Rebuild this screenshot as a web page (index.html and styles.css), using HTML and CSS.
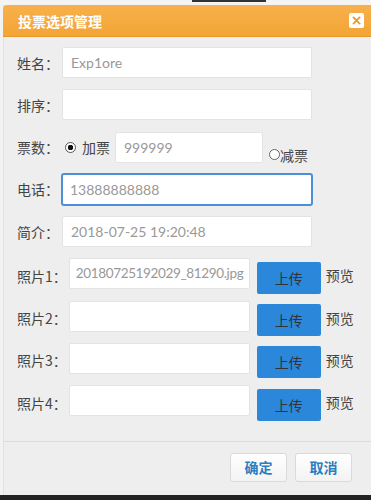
FILE: index.html
```html
<!DOCTYPE html>
<html lang="zh-CN">
<head>
  <meta charset="UTF-8">
  <title>投票选项管理</title>
  <link rel="stylesheet" href="styles.css">
</head>
<body>

<div class="topStrip"><span class="topDark"></span></div>

<div class="dialog">
  <div class="dialogTitle">
    <span>投票选项管理</span>
    <span class="closeBtn">×</span>
  </div>

  <div class="dialogBody">
    <div class="row">
      <label>姓名：</label>
      <div class="field wide">Exp1ore</div>
    </div>
    <div class="row">
      <label>排序：</label>
      <div class="field wide"></div>
    </div>
    <div class="row">
      <label>票数：</label>
      <span class="radio checked"></span>
      <span class="radioText">加票</span>
      <div class="field vote">999999</div>
      <span class="radio low"></span>
      <span class="radioText tight">减票</span>
    </div>
    <div class="row">
      <label>电话：</label>
      <div class="field wide focus">13888888888</div>
    </div>
    <div class="row">
      <label>简介：</label>
      <div class="field wide">2018-07-25 19:20:48</div>
    </div>
    <div class="row photoRow">
      <label>照片1：</label>
      <div class="field photo">20180725192029_81290.jpg</div>
      <span class="uploadBtn">上传</span>
      <span class="preview">预览</span>
    </div>
    <div class="row photoRow">
      <label>照片2：</label>
      <div class="field photo"></div>
      <span class="uploadBtn">上传</span>
      <span class="preview">预览</span>
    </div>
    <div class="row photoRow">
      <label>照片3：</label>
      <div class="field photo"></div>
      <span class="uploadBtn">上传</span>
      <span class="preview">预览</span>
    </div>
    <div class="row photoRow">
      <label>照片4：</label>
      <div class="field photo"></div>
      <span class="uploadBtn">上传</span>
      <span class="preview">预览</span>
    </div>
  </div>

  <div class="dialogFoot">
    <span class="footBtn">确定</span>
    <span class="footBtn">取消</span>
  </div>
</div>

<div class="bottomBar"></div>

</body>
</html>
```

FILE: styles.css
```css
* { box-sizing: border-box; }
body {
  margin: 0;
  background: #f2f2f2;
  font-family: "Noto Sans CJK SC", "Noto Sans", sans-serif;
  font-size: 14px;
  color: #444;
  overflow: hidden;
}

.topStrip {
  height: 5px;
  background: #f4f4f4;
}
.topDark {
  display: block;
  margin-left: 192px;
  width: 74px;
  height: 2px;
  background: #333;
}

.dialog {
  margin-left: 3px;
  height: 490px;
  background: #eeeeee;
  border-left: 1px solid #e2e2e2;
  display: flex;
  flex-direction: column;
}

.dialogTitle {
  height: 32px;
  flex: none;
  display: flex;
  align-items: center;
  justify-content: space-between;
  padding: 0 7px 0 15px;
  background: linear-gradient(#f8b04c, #f3a534);
  border-bottom: 1px solid #e8982a;
  border-radius: 4px 0 0 0;
  color: #fff;
  font-weight: bold;
  font-size: 14px;
  margin-left: -1px;
}

.closeBtn {
  width: 15px;
  height: 15px;
  background: #fff;
  border-radius: 2px;
  color: #f0962a;
  font-family: "DejaVu Sans", sans-serif;
  font-weight: bold;
  font-size: 14px;
  line-height: 15px;
  text-align: center;
}

.dialogBody {
  flex: 1;
  padding: 10px 0 0 13px;
}

.row {
  display: flex;
  align-items: center;
  height: 31px;
  margin-bottom: 11.25px;
}

.row label {
  margin-right: 2px;
  white-space: nowrap;
}
.photoRow label { margin-top: 4px; }

.field {
  height: 31px;
  background: #fff;
  border: 1px solid #e3e3e3;
  border-radius: 2px;
  padding: 0 8px;
  line-height: 29px;
  color: #999;
  font-family: Lato, "Noto Sans CJK SC", sans-serif;
  font-size: 14px;
  white-space: nowrap;
  overflow: hidden;
}
.field.wide { width: 250px; margin-left: 1px; }
.field.vote { width: 148px; margin-left: 5px; }
.field.photo {
  width: 181px;
  padding-left: 6px;
  font-size: 13.5px;
  letter-spacing: -0.35px;
}

.field.focus {
  height: 33px;
  width: 252px;
  margin-left: 0;
  border: 2px solid #4a8fd8;
  border-radius: 3px;
  line-height: 29px;
  padding-left: 7px;
}

.radio {
  width: 11px;
  height: 11px;
  margin-left: 4px;
  border: 1px solid #555;
  border-radius: 50%;
  background: #fff;
  flex: none;
}
.radio.checked {
  background: radial-gradient(circle, #111 0 2.5px, #fff 3px);
}
.radio.low {
  margin-left: 6px;
  align-self: flex-end;
  margin-bottom: 3px;
  border-color: #666;
}

.radioText { margin-left: 6px; }
.radioText.tight {
  margin-left: 0;
  align-self: flex-end;
  margin-bottom: -2px;
}

.uploadBtn {
  width: 64px;
  height: 32px;
  margin: 8px 0 0 7px;
  background: #2b87da;
  border-radius: 2px;
  color: #333;
  text-align: center;
  line-height: 32px;
  flex: none;
}

.preview {
  margin: 3px 0 0 5px;
}

.dialogFoot {
  flex: none;
  height: 54px;
  border-top: 1px solid #dcdcdc;
  display: flex;
  justify-content: flex-end;
  align-items: flex-start;
  gap: 8px;
  padding: 11px 19px 0 0;
}

.footBtn {
  width: 57px;
  height: 29px;
  background: linear-gradient(#ffffff, #f3f3f3);
  border: 1px solid #dadada;
  border-radius: 3px;
  color: #2a7fc2;
  font-weight: bold;
  text-align: center;
  line-height: 27px;
}

.bottomBar {
  height: 5px;
  background: #222;
}
```
